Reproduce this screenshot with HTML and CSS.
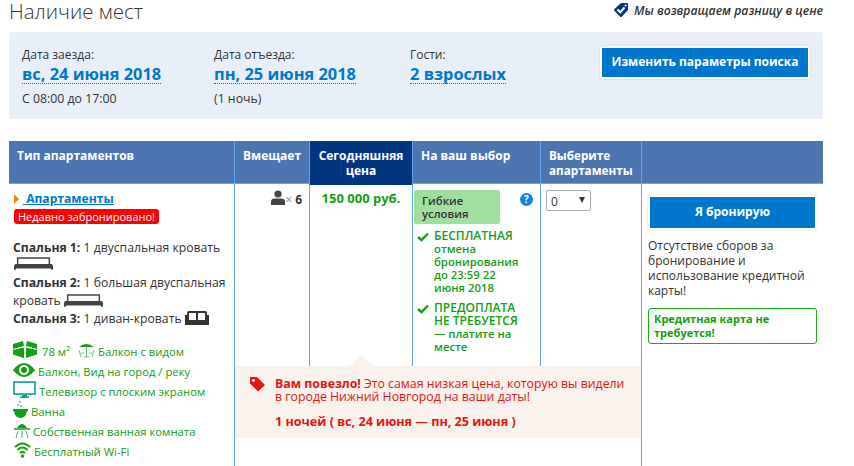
FILE: index.html
```html
<!DOCTYPE html>
<html lang="ru">
<head>
<meta charset="utf-8">
<title>Наличие мест</title>
<link rel="stylesheet" href="styles.css">
</head>
<body>
<div class="page">
  <header class="top">
    <h1 class="title">Наличие мест</h1>
    <div class="promise">
      <svg class="promise-icon" viewBox="0 0 16 16"><path d="M1.5 7 L7.5 1.5 Q8 1 9 1 H14 Q15 1 15 2 V7 Q15 8 14.5 8.5 L9 14.5 Q8 15.5 7 14.5 L1.5 9 Q0.5 8 1.5 7 Z" fill="#003580"/><path d="M4.5 7.5 L7.3 10.3 L11.5 5.5" fill="none" stroke="#fff" stroke-width="2"/><circle cx="12.6" cy="3.4" r="1" fill="#fff"/></svg>
      <span>Мы возвращаем разницу в цене</span>
    </div>
  </header>
  <section class="search">
    <div class="search-col col-in">
      <div class="search-label">Дата заезда:</div>
      <div class="search-value">вс, 24 июня 2018</div>
      <div class="search-note">С 08:00 до 17:00</div>
    </div>
    <div class="search-col col-out">
      <div class="search-label">Дата отъезда:</div>
      <div class="search-value">пн, 25 июня 2018</div>
      <div class="search-note">(1 ночь)</div>
    </div>
    <div class="search-col col-guests">
      <div class="search-label">Гости:</div>
      <div class="search-value">2 взрослых</div>
    </div>
    <div class="btn-frame search-btn"><div class="btn">Изменить параметры поиска</div></div>
  </section>
  <section class="table">
    <div class="head">
      <div class="th">Тип апартаментов</div>
      <div class="th">Вмещает</div>
      <div class="th th-today">Сегодняшняя цена</div>
      <div class="th">На ваш выбор</div>
      <div class="th th-select">Выберите апартаменты</div>
      <div class="th th-last"></div>
    </div>
    <div class="body">
      <div class="td td-type">
        <div class="room-name"><span class="tri"></span><a class="room-link">&nbsp;Апартаменты</a></div>
        <div class="badge">Недавно забронировано!</div>
        <div class="beds">
          <div class="bed"><b>Спальня 1:</b> 1 двуспальная кровать
            <svg class="bed-icon" viewBox="0 0 40 13"><path d="M3 0 H37 V7 H35.5 V1.5 H4.5 V7 H3 Z M1 7 H39 L40 9 V13 H38 V11.5 H2 V13 H0 V9 Z" fill="#444"/></svg></div>
          <div class="bed"><b>Спальня 2:</b> 1 большая двуспальная кровать
            <svg class="bed-icon bed-icon-in" viewBox="0 0 40 13"><path d="M3 0 H37 V7 H35.5 V1.5 H4.5 V7 H3 Z M1 7 H39 L40 9 V13 H38 V11.5 H2 V13 H0 V9 Z" fill="#444"/></svg></div>
          <div class="bed"><b>Спальня 3:</b> 1 диван-кровать
            <svg class="sofa-icon" viewBox="0 0 24 14"><path d="M4 0 H20 Q22 0 22 2 V4 H24 V14 H0 V4 H2 V2 Q2 0 4 0 Z" fill="#333"/><path d="M4 2 H11 V9 H4 Z M13 2 H20 V9 H13 Z" fill="#fff"/></svg></div>
        </div>
        <ul class="facilities">
          <li><svg class="fi" width="24" height="17" viewBox="0 0 24 17"><path d="M0 3 L10 0 L11 5 L0 8 Z M14 0 L24 3 V8 L13 5 Z M0 9 L11 6.5 V17 L0 13.5 Z M13 6.5 L24 9 V13.5 L13 17 Z" fill="#12a012"/></svg><span class="fi-size">78 м²</span><svg class="fi fi-gap" width="17" height="16" viewBox="0 0 17 16"><path d="M1 5 Q8 -1 16 5 Z" fill="#12a012"/><path d="M8.5 5 V15 M6 15 H11 M1 8 L3 15 M16 8 L14 15 M3 11 H6 M14 11 H11" stroke="#3cb371" stroke-width=".8" fill="none"/></svg><span>Балкон с видом</span></li>
          <li><svg class="fi" width="22" height="16" viewBox="0 0 22 16"><path d="M0 8 Q11 -6 22 8 Q11 22 0 8 Z" fill="#12a012"/><circle cx="11" cy="8" r="5" fill="#fff"/><circle cx="11" cy="8" r="3" fill="#12a012"/></svg><span>Балкон, Вид на город / реку</span></li>
          <li><svg class="fi" width="23" height="17" viewBox="0 0 23 17"><rect x="1" y="1" width="21" height="12" fill="none" stroke="#00a58c" stroke-width="1.6"/><path d="M9 14 H14 V15.5 H16 V17 H7 V15.5 H9 Z" fill="#00a58c"/></svg><span>Телевизор с плоским экраном</span></li>
          <li><svg class="fi" width="15" height="17" viewBox="0 0 15 17"><path d="M0 8 H15 V10 H14 Q13 17 7.5 17 Q2 17 1 10 H0 Z" fill="#12a012"/><path d="M7 0 V2 M5 3 V5 M8 4 V6" stroke="#3cb371" stroke-width="1.2"/></svg><span>Ванна</span></li>
          <li class="row-shower"><svg class="fi" width="16" height="16" viewBox="0 0 16 16"><path d="M3 6 Q8 -2 13 6 Z" fill="#12a012"/><path d="M0 7 H16" stroke="#12a012" stroke-width="1.5"/><path d="M4 9 L2 16 M8 9 V16 M12 9 L14 16" stroke="#3cb371" fill="none"/></svg><span>Собственная ванная комната</span></li>
          <li class="row-wifi"><svg class="fi" width="17" height="16" viewBox="0 0 17 16"><path d="M1 5 Q8.5 -2 16 5 M3.5 8 Q8.5 3 13.5 8 M6 11 Q8.5 9 11 11" fill="none" stroke="#12a012" stroke-width="2"/><circle cx="8.5" cy="14" r="1.7" fill="#12a012"/></svg><span class="fi-wide">Бесплатный Wi-Fi</span></li>
        </ul>
      </div>
      <div class="td td-sleeps"><svg class="person" width="14" height="15" viewBox="0 0 14 15"><circle cx="7" cy="4" r="3.6" fill="#444"/><path d="M0 15 V11.5 Q0 8.5 4 8.5 H10 Q14 8.5 14 11.5 V15 Z" fill="#444"/></svg><span class="times">×</span> <b>6</b></div>
      <div class="td td-price">150 000 руб.</div>
      <div class="td td-choice">
        <div class="flex-row">
          <div class="flex-tag">Гибкие условия</div>
          <div class="help">?</div>
        </div>
        <div class="cond"><svg class="check" viewBox="0 0 12 10"><path d="M1 5 L4.5 8 L11 1.5" fill="none" stroke="#12a012" stroke-width="2.4"/></svg>
          <div class="cond-text"><span class="cond-big">БЕСПЛАТНАЯ</span><br>отмена бронирования до 23:59 22 июня 2018</div></div>
        <div class="cond"><svg class="check" viewBox="0 0 12 10"><path d="M1 5 L4.5 8 L11 1.5" fill="none" stroke="#12a012" stroke-width="2.4"/></svg>
          <div class="cond-text"><span class="cond-big">ПРЕДОПЛАТА НЕ ТРЕБУЕТСЯ</span><br>— платите на месте</div></div>
      </div>
      <div class="td td-select"><div class="select"><span>0</span><span class="caret"></span></div></div>
      <div class="td td-book">
        <div class="btn-frame"><div class="btn btn-book">Я бронирую</div></div>
        <p class="no-fees">Отсутствие сборов за бронирование и использование кредитной карты!</p>
        <div class="no-card">Кредитная карта не требуется!</div>
      </div>
    </div>
    <div class="lucky-layer">
      <div class="lucky">
        <svg class="lucky-icon" viewBox="0 0 17 16"><path d="M1 1 H8 L16 9 L9 15.5 L1 7.5 Z" fill="#e31515"/><circle cx="4.5" cy="4.5" r="1.4" fill="#fff"/></svg>
        <div class="lucky-text">
          <p class="lucky-msg"><b>Вам повезло!</b> Это самая низкая цена, которую вы видели в городе Нижний Новгород на ваши даты!</p>
          <p class="lucky-dates">1 ночей ( вс, 24 июня — пн, 25 июня )</p>
        </div>
      </div>
    </div>
  </section>
</div>
</body>
</html>
```
FILE: styles.css
```css
* { box-sizing: border-box; }
html, body { margin: 0; padding: 0; height: 466px; overflow: hidden; background: #fff; }
body { font-family: "Open Sans", "Noto Sans", sans-serif; font-size: 12px; color: #333; }
.page { width: 814px; margin-left: 9px; }
.top { display: flex; justify-content: space-between; align-items: flex-start; height: 32px; }
.title { margin: 0; font-size: 20.5px; font-weight: 300; line-height: 22px; color: #333; }
.promise { display: flex; align-items: center; gap: 5px; font-style: italic; font-weight: 600; font-size: 12.2px; color: #333; height: 20px; }
.promise-icon { width: 16px; height: 16px; }
.search { display: flex; height: 87px; background: #e9eff9; border-radius: 3px; padding: 14px 13px 0 13px; align-items: flex-start; }
.col-in { width: 192px; }
.col-out { width: 196px; }
.col-guests { width: 190px; }
.search-label { font-size: 12px; line-height: 18px; }
.search-value { display: inline-block; font-size: 16.4px; font-weight: 700; color: #0077cc; line-height: 19px; border-bottom: 1px dotted #0077cc; }
.search-note { font-size: 12.3px; line-height: 18px; margin-top: 6px; }
.btn-frame { background: #fff; padding: 2px; border-radius: 2px; box-shadow: 0 0 2px rgba(0,0,0,.2); }
.search-btn { width: 210px; }
.btn { background: #0077cc; color: #fff; font-weight: 700; font-size: 12px; height: 29px; line-height: 28px; text-align: center; }
.table { position: relative; margin-top: 22px; height: 325px; overflow: hidden; }
.head { display: grid; grid-template-columns: 226px 75px 103px 128px 101px 181px; height: 43px; background: #4c76b2; border-bottom: 1px solid #5fa8ef; }
.th { color: #fff; font-weight: 700; font-size: 12px; line-height: 15px; padding: 7px 8px; border-right: 1px solid #5fa8ef; }
.th-today { background: #003580; text-align: center; }
.th-select { font-size: 11.7px; }
.th-last { border-right: 0; }
.body { display: grid; grid-template-columns: 226px 75px 103px 128px 101px 181px; height: 282px; }
.td { border-right: 1px solid #5fa8ef; }
.td:last-child { border-right: 0; }
.td-type { padding: 6px 4px 0 5px; }
.room-name { display: flex; align-items: center; line-height: 17px; }
.tri { width: 0; height: 0; border-left: 5px solid #f08a00; border-top: 5px solid transparent; border-bottom: 5px solid transparent; margin-right: 4px; }
.room-link { color: #0077cc; font-weight: 700; text-decoration: underline; font-size: 12.1px; }
.badge { display: inline-block; background: #f00; color: #fff; border-radius: 3px; padding: 0 4px; font-size: 11px; line-height: 15px; margin-top: 2px; white-space: nowrap; }
.beds { margin-top: 14px; margin-left: -1px; font-size: 12.2px; }
.bed { line-height: 18px; }
.bed-icon { display: block; width: 39px; height: 13px; margin: 0 0 4px 1px; }
.bed-icon-in { display: inline-block; vertical-align: -2px; margin: 0; }
.sofa-icon { display: inline-block; width: 24px; height: 14px; vertical-align: -2px; }
.facilities { list-style: none; margin: 13px 0 0 -1px; padding: 0; color: #12a012; font-size: 11.3px; }
.facilities li { display: flex; align-items: center; gap: 3px; height: 20px; white-space: nowrap; }
.fi { flex: none; margin-top: -3px; }
.fi-size { margin-left: 2px; }
.fi-gap { margin-left: 5px; }
.row-shower { padding-left: 1px; }
.row-wifi { padding-left: 1px; }
.td-sleeps { text-align: right; padding: 6px 7px; line-height: 17px; }
.person { vertical-align: -1px; }
.times { color: #888; }
.td-price { color: #12a012; font-weight: 700; text-align: center; padding-top: 6px; font-size: 13px; line-height: 17px; }
.td-choice { padding: 6px 5px 0 1px; color: #12a012; font-weight: 600; font-size: 11.3px; line-height: 13px; }
.flex-row { display: flex; justify-content: space-between; align-items: flex-start; }
.flex-tag { width: 86px; height: 34px; background: #9fe09f; border-radius: 2px; color: #333; padding: 4px 8px; line-height: 13px; }
.help { width: 13px; height: 13px; margin: 3px 2px 0 0; border-radius: 50%; background: #0a84e6; color: #fff; font-size: 10px; font-weight: 700; text-align: center; line-height: 13px; }
.cond { display: flex; gap: 5px; margin: 5px 0 0 3px; }
.cond + .cond { margin-top: 7px; }
.cond-text { width: 88px; }
.cond-big { font-size: 12px; }
.check { width: 12px; height: 10px; flex: none; margin-top: 3px; }
.td-select { padding: 6px 5px; }
.select { display: flex; justify-content: space-between; width: 45px; height: 21px; border: 1px solid #aaa; border-radius: 2px; padding: 2px 5px 0 4px; font-size: 12px; background: #fff; }
.caret { width: 0; height: 0; margin-top: 4px; border-left: 3px solid transparent; border-right: 3px solid transparent; border-top: 6px solid #333; }
.td-book { padding: 11px 6px 0 6px; }
.btn-book { height: 31px; line-height: 30px; }
.no-fees { margin: 8px 0 0; line-height: 15px; }
.no-card { margin-top: 10px; height: 36px; border: 1px solid #12b012; border-radius: 3px; color: #12a012; font-weight: 700; font-size: 11px; padding: 3px 5px; line-height: 14px; }
.lucky-layer { position: absolute; left: 226px; top: 225px; width: 406px; height: 100px; background: #fff; }
.lucky { position: relative; display: flex; gap: 9px; background: #f9f2ec; height: 72px; padding: 11px 14px 0; color: #e31515; font-size: 12.3px; line-height: 13px; }
.lucky::before { content: ""; position: absolute; left: 114px; top: -11px; border-left: 12px solid transparent; border-right: 12px solid transparent; border-bottom: 11px solid #f9f2ec; }
.lucky-icon { flex: none; width: 17px; height: 16px; margin-top: -1px; }
.lucky-text { width: 352px; }
.lucky-text p { margin: 0; }
.lucky-dates { margin-top: 12px !important; font-weight: 700; font-size: 12.6px; }
```
